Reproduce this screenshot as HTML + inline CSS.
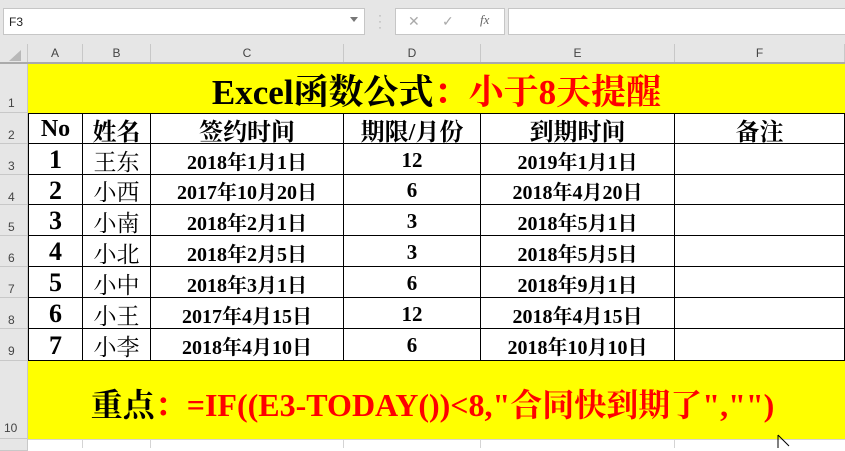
<!DOCTYPE html>
<html><head><meta charset="utf-8"><style>
*{margin:0;padding:0;box-sizing:border-box}
body{width:845px;height:448px;overflow:hidden;background:#fff;position:relative;font-family:"Liberation Sans",sans-serif}
.a{position:absolute}
.top{left:0;top:0;width:845px;height:44px;background:#e6e6e6}
.hdr{background:#e6e6e6;color:#444;font-size:12px;text-align:center;border-right:1px solid #c8c8c8;border-bottom:1px solid #c8c8c8}
.cell{font-family:"Liberation Serif","Noto Serif CJK SC",serif;font-weight:bold;text-align:center;display:flex;align-items:center;justify-content:center;border-right:1px solid #000;border-bottom:1px solid #000;color:#000;white-space:nowrap;padding-top:2px}
</style></head><body>
<div class="a top"></div>
<div class="a" style="left:3px;top:8px;width:362px;height:27px;background:#fff;border:1px solid #c6c6c6;font-size:12px;padding:6px 5px;color:#222">F3</div>
<div class="a" style="left:350px;top:17px;width:0;height:0;border-left:4px solid transparent;border-right:4px solid transparent;border-top:5px solid #777"></div>
<div class="a" style="left:378px;top:12px;color:#aaa;font-size:12px;line-height:6px">·<br>·<br>·</div>
<div class="a" style="left:395px;top:8px;width:110px;height:27px;background:#fff;border:1px solid #c6c6c6;color:#aaa;font-size:14px">
<span class="a" style="left:12px;top:4px">✕</span><span class="a" style="left:46px;top:4px">✓</span><span class="a" style="left:84px;top:3px;font-family:'Liberation Serif',serif;font-style:italic;font-size:13px;color:#666">fx</span></div>
<div class="a" style="left:508px;top:8px;width:340px;height:27px;background:#fff;border:1px solid #c6c6c6"></div>
<div class="a hdr" style="left:0;top:44px;width:28px;height:19px"></div>
<div class="a" style="left:9px;top:50px;width:0;height:0;border-left:12px solid transparent;border-bottom:11px solid #b8b8b8"></div>
<div class="a hdr" style="left:28px;top:44px;width:55px;height:19px;line-height:18px">A</div>
<div class="a hdr" style="left:83px;top:44px;width:68px;height:19px;line-height:18px">B</div>
<div class="a hdr" style="left:151px;top:44px;width:193px;height:19px;line-height:18px">C</div>
<div class="a hdr" style="left:344px;top:44px;width:137px;height:19px;line-height:18px">D</div>
<div class="a hdr" style="left:481px;top:44px;width:194px;height:19px;line-height:18px">E</div>
<div class="a hdr" style="left:675px;top:44px;width:170px;height:19px;line-height:18px">F</div>
<div class="a" style="left:0;top:62px;width:845px;height:2px;background:#aaa"></div>
<div class="a hdr" style="left:0;top:64px;width:28px;height:49px;text-align:left;padding:32px 0 0 8px">1</div>
<div class="a hdr" style="left:0;top:113px;width:28px;height:31px;text-align:left;padding:15px 0 0 8px">2</div>
<div class="a hdr" style="left:0;top:144px;width:28px;height:31px;text-align:left;padding:15px 0 0 8px">3</div>
<div class="a hdr" style="left:0;top:175px;width:28px;height:30px;text-align:left;padding:15px 0 0 8px">4</div>
<div class="a hdr" style="left:0;top:205px;width:28px;height:31px;text-align:left;padding:15px 0 0 8px">5</div>
<div class="a hdr" style="left:0;top:236px;width:28px;height:31px;text-align:left;padding:15px 0 0 8px">6</div>
<div class="a hdr" style="left:0;top:267px;width:28px;height:31px;text-align:left;padding:15px 0 0 8px">7</div>
<div class="a hdr" style="left:0;top:298px;width:28px;height:31px;text-align:left;padding:15px 0 0 8px">8</div>
<div class="a hdr" style="left:0;top:329px;width:28px;height:32px;text-align:left;padding:15px 0 0 8px">9</div>
<div class="a hdr" style="left:0;top:361px;width:28px;height:78px;text-align:left;padding:60px 0 0 4px">10</div>
<div class="a hdr" style="left:0;top:439px;width:28px;height:12px"></div>
<div class="a" style="left:28px;top:64px;width:817px;height:49px;background:#ff0;display:flex;align-items:center;justify-content:center;font-family:'Liberation Serif','Noto Serif CJK SC',serif;font-weight:bold;font-size:35px;padding-top:2px;white-space:nowrap"><span>Excel函数公式</span><span style="color:#f00">：小于8天提醒</span></div>
<div class="a" style="left:28px;top:113px;width:817px;height:248px;border-top:1px solid #000"></div>
<div id="t"></div>
<div class="a" style="left:28px;top:361px;width:817px;height:78px;background:#ff0;display:flex;align-items:center;justify-content:center;font-family:'Liberation Serif','Noto Serif CJK SC',serif;font-weight:bold;font-size:32px;padding-top:6px;padding-right:8px;white-space:nowrap"><span>重点</span><span style="color:#f00">：=IF((E3-TODAY())&lt;8,"合同快到期了","")</span></div>
<div class="a" style="left:28px;top:439px;width:817px;height:9px;border-top:1px solid #d4d4d4"></div>
<div class="a" style="left:82px;top:440px;width:1px;height:8px;background:#d4d4d4"></div>
<div class="a" style="left:150px;top:440px;width:1px;height:8px;background:#d4d4d4"></div>
<div class="a" style="left:343px;top:440px;width:1px;height:8px;background:#d4d4d4"></div>
<div class="a" style="left:480px;top:440px;width:1px;height:8px;background:#d4d4d4"></div>
<div class="a" style="left:674px;top:440px;width:1px;height:8px;background:#d4d4d4"></div>
<svg class="a" style="left:777px;top:434px" width="14" height="14"><path d="M1 1 L1 14 M1 1 L12 12" stroke="#000" fill="#fff"/></svg>
<script>
var cols=[[28,55],[83,68],[151,193],[344,137],[481,194],[675,170]];
var rows=[113,144,175,205,236,267,298,329,361];
var data=[["No","姓名","签约时间","期限/月份","到期时间","备注"],
["1","王东","2018年1月1日","12","2019年1月1日",""],
["2","小西","2017年10月20日","6","2018年4月20日",""],
["3","小南","2018年2月1日","3","2018年5月1日",""],
["4","小北","2018年2月5日","3","2018年5月5日",""],
["5","小中","2018年3月1日","6","2018年9月1日",""],
["6","小王","2017年4月15日","12","2018年4月15日",""],
["7","小李","2018年4月10日","6","2018年10月10日",""]];
var h="";
for(var r=0;r<8;r++)for(var c=0;c<6;c++){
var fs=r==0?24:(c==0?26:(c==1?23:(c==3?21:20)));
var bl=c==0?"border-left:1px solid #000;":"";
h+='<div class="a cell" style="'+bl+'left:'+cols[c][0]+'px;top:'+rows[r]+'px;width:'+cols[c][1]+'px;height:'+(rows[r+1]-rows[r])+'px;font-size:'+fs+'px;'+(c==1&&r>0?'font-weight:normal;':'')+'">'+data[r][c]+'</div>';}
document.getElementById("t").outerHTML=h;
</script>
</body></html>
